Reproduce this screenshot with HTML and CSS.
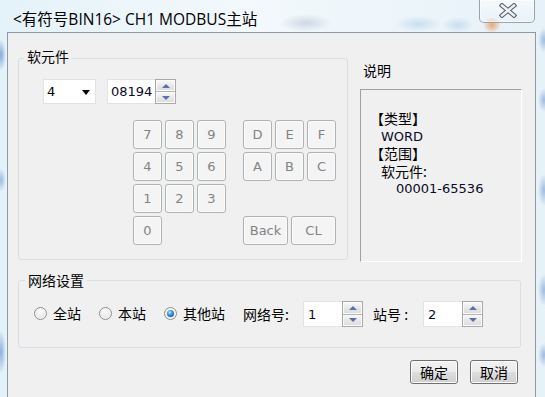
FILE: index.html
```html
<!DOCTYPE html>
<html>
<head>
<meta charset="utf-8">
<link rel="stylesheet" href="styles.css">
</head>
<body>
<div class="window">
  <div class="titlebar">
    <div class="title">&lt;有符号BIN16&gt; CH1 MODBUS主站</div>
    <div class="close">
      <svg width="18" height="15" viewBox="0 0 18 15">
        <path d="M3 2.5 L15 12.5 M15 2.5 L3 12.5" stroke="#59616d" stroke-width="4.6" stroke-linecap="square" fill="none"/>
        <path d="M3 2.5 L15 12.5 M15 2.5 L3 12.5" stroke="#eef1f4" stroke-width="2.4" stroke-linecap="square" fill="none"/>
      </svg>
    </div>
  </div>
  <div class="client">
    <div class="top-row">
      <div class="group group-dev">
        <div class="group-title">软元件</div>
        <div class="dev-row">
          <div class="combo"><span>4</span><span class="combo-arrow"></span></div>
          <div class="spin spin-dev">
            <span class="spin-val">08194</span>
            <div class="spin-btns"><div class="spin-btn up"></div><div class="spin-btn down"></div></div>
          </div>
        </div>
        <div class="keypad">
          <div class="pad">
            <div class="key">7</div><div class="key">8</div><div class="key">9</div>
            <div class="key">4</div><div class="key">5</div><div class="key">6</div>
            <div class="key">1</div><div class="key">2</div><div class="key">3</div>
            <div class="key">0</div>
          </div>
          <div class="pad">
            <div class="key">D</div><div class="key">E</div><div class="key">F</div>
            <div class="key">A</div><div class="key">B</div><div class="key">C</div>
            <div class="wide-row"><div class="key">Back</div><div class="key">CL</div></div>
          </div>
        </div>
      </div>
      <div class="desc">
        <div class="desc-title">说明</div>
        <div class="desc-box">
          <div class="dl">【类型】</div>
          <div class="dl dl-latin dl-word">WORD</div>
          <div class="dl">【范围】</div>
          <div class="dl dl-ind">软元件:</div>
          <div class="dl dl-latin dl-range">00001-65536</div>
        </div>
      </div>
    </div>
    <div class="group group-net">
      <div class="group-title">网络设置</div>
      <div class="net-row">
        <div class="opt"><span class="radio"></span><span>全站</span></div>
        <div class="opt"><span class="radio"></span><span>本站</span></div>
        <div class="opt opt-wide"><span class="radio checked"><span class="dot"></span></span><span>其他站</span></div>
        <span class="net-label">网络号:</span>
        <div class="spin spin-net">
          <span class="spin-val">1</span>
          <div class="spin-btns"><div class="spin-btn up"></div><div class="spin-btn down"></div></div>
        </div>
        <span class="net-label net-label-st">站号 :</span>
        <div class="spin spin-net">
          <span class="spin-val">2</span>
          <div class="spin-btns"><div class="spin-btn up"></div><div class="spin-btn down"></div></div>
        </div>
      </div>
    </div>
    <div class="actions">
      <div class="btn">确定</div>
      <div class="btn">取消</div>
    </div>
  </div>
</div>
</body>
</html>
```
FILE: styles.css
```css
* { box-sizing: border-box; }
html, body { margin: 0; padding: 0; }
body { width: 545px; height: 397px; overflow: hidden; }

.window {
  width: 545px;
  height: 397px;
  overflow: hidden;
  font-family: "Noto Sans CJK SC", sans-serif;
  font-size: 14px;
  color: #000;
  background:
    radial-gradient(9px 8px at 492px 25px, rgba(232,140,80,.75), rgba(232,140,80,0)),
    radial-gradient(26px 9px at 306px 23px, rgba(140,158,185,.35), rgba(140,158,185,0)),
    radial-gradient(24px 8px at 418px 24px, rgba(140,180,220,.35), rgba(140,180,220,0)),
    radial-gradient(16px 8px at 458px 25px, rgba(140,180,220,.35), rgba(140,180,220,0)),
    radial-gradient(5px 16px at 1px 55px, rgba(70,120,195,.6), rgba(70,120,195,0)),
    radial-gradient(5px 12px at 1px 180px, rgba(70,120,195,.45), rgba(70,120,195,0)),
    radial-gradient(5px 22px at 1px 352px, rgba(70,120,195,.55), rgba(70,120,195,0)),
    radial-gradient(6px 12px at 544px 40px, rgba(70,120,195,.45), rgba(70,120,195,0)),
    radial-gradient(6px 12px at 544px 100px, rgba(70,120,195,.45), rgba(70,120,195,0)),
    radial-gradient(6px 16px at 544px 190px, rgba(70,120,195,.45), rgba(70,120,195,0)),
    radial-gradient(6px 16px at 544px 290px, rgba(70,120,195,.45), rgba(70,120,195,0)),
    radial-gradient(6px 12px at 544px 355px, rgba(70,120,195,.45), rgba(70,120,195,0)),
    linear-gradient(90deg, #e4f2f9, #f3f9fc 45%, #e6f1f8);
}

/* title bar */
.titlebar { display: flex; height: 32px; }
.title {
  flex: 1;
  padding: 10px 0 0 13px;
  font-family: "Open Sans", "Noto Sans CJK SC", sans-serif;
  font-size: 15.5px;
  line-height: 18px;
  white-space: nowrap;
}
.close {
  width: 56px;
  height: 23px;
  margin-right: 10px;
  border: 1px solid rgba(95,105,120,.6);
  border-top: 0;
  border-radius: 0 0 5px 5px;
  background: linear-gradient(rgba(255,255,255,.55), rgba(235,242,248,.35));
  box-shadow: inset 0 0 0 1px rgba(255,255,255,.55);
  display: flex;
  align-items: center;
  justify-content: center;
}
.close svg { display: block; margin: 0 0 1px 2px; }

/* client area */
.client {
  margin-left: 7px;
  width: 529px;
  height: 365px;
  border: 1px solid #8d9aa6;
  border-bottom: 0;
  background: #f0f0f0;
}
.top-row { display: flex; align-items: flex-start; padding-left: 10px; }

.group { border: 1px solid #d5dfe5; border-radius: 3px; }
.group-title {
  display: block;
  width: fit-content;
  height: 16px;
  line-height: 16px;
  padding: 0 3px;
  background: #f0f0f0;
  white-space: nowrap;
}
.group-dev { margin-top: 25px; width: 330px; height: 202px; }
.group-dev .group-title { margin: -11px 0 -5px 5px; }

.dev-row { display: flex; margin-top: 20px; padding-left: 24px; }
.combo {
  width: 53px;
  height: 25px;
  border: 1px solid #e1e1e1;
  background: #fff;
  display: flex;
  align-items: center;
  justify-content: space-between;
  padding: 0 5px 0 3px;
  font-family: "DejaVu Sans", sans-serif;
  font-size: 13px;
}
.combo-arrow {
  width: 0;
  height: 0;
  border-left: 4.5px solid transparent;
  border-right: 4.5px solid transparent;
  border-top: 5px solid #000;
  margin-top: 1px;
}

.spin {
  display: flex;
  background: #fff;
  border: 1px solid #e2e3e8;
}
.spin-val {
  flex: 1;
  display: flex;
  align-items: center;
  padding-left: 3px;
  font-family: "DejaVu Sans", sans-serif;
  font-size: 13px;
  color: #0a0a28;
}
.spin-btns {
  width: 21px;
  margin: -1px -1px -1px 0;
  border: 1px solid #a9a9a9;
  display: flex;
  flex-direction: column;
  background: #e9e9e9;
}
.spin-btn {
  flex: 1;
  display: flex;
  align-items: center;
  justify-content: center;
  background: linear-gradient(#fafafa, #e6e6e6 55%, #dcdcdc);
  box-shadow: inset 0 0 0 1px #fbfbfb;
}
.spin-btn.down { border-top: 1px solid #b4b4b4; }
.spin-btn::before {
  content: "";
  width: 0;
  height: 0;
  border-left: 4px solid transparent;
  border-right: 4px solid transparent;
}
.spin-btn.up::before { border-bottom: 4px solid #5a72a6; }
.spin-btn.down::before { border-top: 4px solid #5a72a6; }

.spin-dev { margin-left: 11px; width: 69px; height: 25px; }

.keypad { display: flex; gap: 17px; margin-top: 16px; padding-left: 114px; }
.pad {
  display: grid;
  grid-template-columns: repeat(3, 29px);
  grid-template-rows: repeat(4, 29px);
  gap: 3px;
}
.key {
  border: 1px solid #adb2b5;
  border-radius: 3px;
  background: #f4f4f4;
  box-shadow: inset 0 0 0 1px #fbfbfb;
  display: flex;
  align-items: center;
  justify-content: center;
  font-family: "DejaVu Sans", sans-serif;
  font-size: 13px;
  color: #838383;
}
.wide-row { grid-column: 1 / -1; grid-row: 4; display: flex; gap: 3px; }
.wide-row .key { flex: 1; }

/* description */
.desc { margin-left: 12px; margin-top: 28px; width: 162px; }
.desc-title { height: 28px; line-height: 18px; padding-left: 3px; }
.desc-box {
  height: 173px;
  border: 1px solid;
  border-color: #a0a0a0 #ffffff #ffffff #a0a0a0;
  padding: 20px 0 0 9px;
  white-space: nowrap;
}
.dl { height: 17.5px; line-height: 17.5px; }
.dl-latin { font-family: "DejaVu Sans", sans-serif; font-size: 13px; color: #0a0a28; }
.dl-word { padding-left: 11px; }
.dl-ind { padding-left: 11px; }
.dl-range { padding-left: 26px; }

/* network group */
.group-net { margin: 18px 0 0 10px; width: 503px; height: 68px; }
.group-net .group-title { margin: -9px 0 -7px 6px; }
.net-row {
  display: flex;
  align-items: center;
  height: 26px;
  margin-top: 20px;
  padding-left: 15px;
}
.opt { display: flex; align-items: center; gap: 6px; width: 65px; margin-top: -2px; }
.opt-wide { width: 79px; }
.radio {
  width: 13px;
  height: 13px;
  border: 1px solid #8e8f8f;
  border-radius: 50%;
  background: radial-gradient(circle at 50% 40%, #ffffff 0, #f2f2f2 35%, #d6d6d6 100%);
  box-shadow: inset 0 0 0 1px rgba(255,255,255,.7);
  display: flex;
  align-items: center;
  justify-content: center;
  flex: none;
}
.radio .dot {
  width: 7px;
  height: 7px;
  border-radius: 50%;
  background: radial-gradient(circle at 40% 35%, #c9ecff 0, #3f9fe2 35%, #0f4f93 85%);
}
.net-label { width: 60px; }
.net-label-st { width: 50px; margin-left: 10px; }
.spin-net { width: 60px; height: 26px; }
.spin-net .spin-val { padding-left: 4px; }

/* action buttons */
.actions {
  display: flex;
  justify-content: flex-end;
  gap: 12px;
  padding-right: 17px;
  margin-top: 12px;
}
.btn {
  width: 48px;
  height: 24px;
  border: 1px solid #707070;
  border-radius: 3px;
  background: linear-gradient(#f2f2f2 0%, #ebebeb 48%, #dddddd 52%, #cfcfcf 100%);
  box-shadow: inset 0 0 0 1px #fcfcfc;
  display: flex;
  align-items: center;
  justify-content: center;
  line-height: 16px;
}
```
